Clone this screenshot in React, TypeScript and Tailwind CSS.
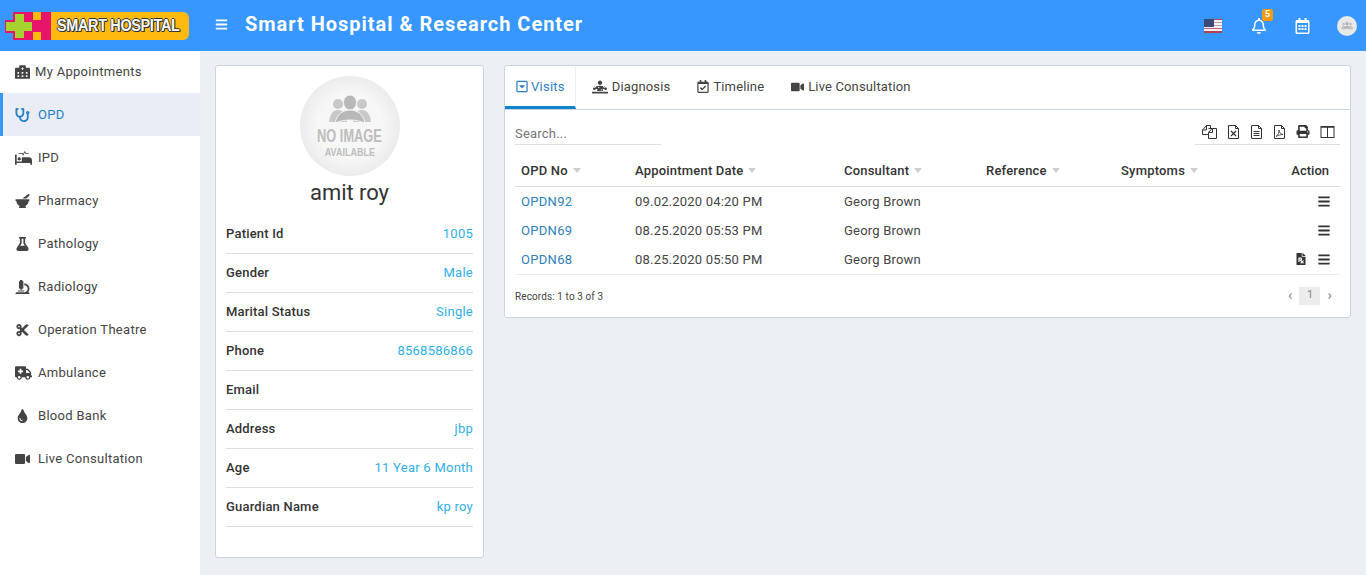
import React from 'react';
import {
  FaAmbulance,
  FaBars,
  FaCut,
  FaDiagnoses,
  FaFilePrescription,
  FaFlask,
  FaHospitalAlt,
  FaMicroscope,
  FaMortarPestle,
  FaPrint,
  FaProcedures,
  FaRegBell,
  FaRegCalendarAlt,
  FaRegCalendarCheck,
  FaRegCaretSquareDown,
  FaStethoscope,
  FaTint,
  FaVideo,
} from 'react-icons/fa';

const menu = [
  { label: 'My Appointments', icon: FaHospitalAlt },
  { label: 'OPD', icon: FaStethoscope, active: true },
  { label: 'IPD', icon: FaProcedures },
  { label: 'Pharmacy', icon: FaMortarPestle },
  { label: 'Pathology', icon: FaFlask },
  { label: 'Radiology', icon: FaMicroscope },
  { label: 'Operation Theatre', icon: FaCut },
  { label: 'Ambulance', icon: FaAmbulance },
  { label: 'Blood Bank', icon: FaTint },
  { label: 'Live Consultation', icon: FaVideo },
];

const details = [
  ['Patient Id', '1005'],
  ['Gender', 'Male'],
  ['Marital Status', 'Single'],
  ['Phone', '8568586866'],
  ['Email', ''],
  ['Address', 'jbp'],
  ['Age', '11 Year 6 Month'],
  ['Guardian Name', 'kp roy'],
];

const visits = [
  { no: 'OPDN92', date: '09.02.2020 04:20 PM', rx: false },
  { no: 'OPDN69', date: '08.25.2020 05:53 PM', rx: false },
  { no: 'OPDN68', date: '08.25.2020 05:50 PM', rx: true },
];

const columns = [
  { label: 'OPD No', width: 'w-[114px]' },
  { label: 'Appointment Date', width: 'w-[209px]' },
  { label: 'Consultant', width: 'w-[142px]' },
  { label: 'Reference', width: 'w-[135px]' },
  { label: 'Symptoms', width: 'w-[130px]' },
];

function Logo() {
  return (
    <div className="flex h-[28px] w-[184px] items-center">
      <svg width="46" height="28" viewBox="0 0 46 28" className="shrink-0">
        <rect x="8" y="0" width="38" height="28" fill="#e8146c" />
        <rect x="0" y="8" width="10" height="13" fill="#e8146c" />
        <rect x="28" y="0" width="8" height="8" fill="#ffb90f" />
        <rect x="28" y="20" width="8" height="8" fill="#ffb90f" />
        <rect x="10" y="2" width="9" height="24" fill="#a5d22f" />
        <rect x="1" y="10" width="26" height="9" fill="#a5d22f" />
      </svg>
      <div className="flex h-full flex-1 items-center overflow-hidden rounded-r-[6px] bg-[#ffb90f] pl-[6px]">
        <span className="inline-block origin-left scale-x-[0.9] whitespace-nowrap font-['Liberation_Sans',sans-serif] text-[16px] leading-none font-bold tracking-[-0.35px] text-white [text-shadow:1px_0_#333,-1px_0_#333,0_1px_#333,0_-1px_#333,1px_1px_#333]">
          SMART HOSPITAL
        </span>
      </div>
    </div>
  );
}

function Flag() {
  return (
    <svg width="18" height="14" viewBox="0 0 18 14">
      <rect width="18" height="14" fill="#f2f2f6" />
      <rect y="0" width="18" height="1" fill="#c0404c" />
      <rect y="3" width="18" height="1" fill="#c9a3b0" />
      <rect y="6" width="18" height="1" fill="#c9a3b0" />
      <rect y="9" width="18" height="1" fill="#c0606c" />
      <rect y="12" width="18" height="2" fill="#b8404c" />
      <rect width="10" height="8" y="0" fill="#3b4a78" />
    </svg>
  );
}

// three people silhouette used on the no-image avatar
function People({ className }: { className?: string }) {
  return (
    <svg viewBox="0 0 42 28" className={className} fill="currentColor">
      <circle cx="9" cy="9" r="5" opacity="0.75" />
      <circle cx="33" cy="9" r="5" opacity="0.75" />
      <path d="M0 27c1-8 4-12 9-12s8 4 9 12z" opacity="0.75" />
      <path d="M24 27c1-8 4-12 9-12s8 4 9 12z" opacity="0.75" />
      <ellipse cx="21" cy="7.5" rx="6.5" ry="7.5" stroke="#f4f4f4" strokeWidth="1" />
      <path d="M6 28c2-9 8-13 15-13s13 4 15 13c-9-4-21-4-30 0z" stroke="#f4f4f4" strokeWidth="1" />
    </svg>
  );
}

function SortCaret() {
  return <span className="ml-[5px] inline-block h-0 w-0 translate-y-[-1px] border-x-[4px] border-t-[5px] border-x-transparent border-t-[#cfcfcf] align-middle" />;
}

function FileIcon({ children }: { children?: React.ReactNode }) {
  return (
    <svg width="13" height="14" viewBox="0 0 13 14" fill="none" stroke="currentColor" strokeWidth="1">
      <path d="M1.5.5h7l3 3v10h-10z" />
      <path d="M8.5.5v3h3" />
      {children}
    </svg>
  );
}

function CopyIcon() {
  return (
    <svg width="15" height="14" viewBox="0 0 15 14" fill="none" stroke="currentColor" strokeWidth="1">
      <path d="M6 9.5H.5V5L4.5.5H8.5V3" />
      <path d="M4.5.5V5H.5" />
      <path d="M6.5 3.5h4l4 0v10h-8V7.5L10 3.5" />
      <path d="M10.5 3.5v4h-4" />
    </svg>
  );
}

function ColumnsIcon() {
  return (
    <svg width="15" height="14" viewBox="0 0 15 14" fill="none" stroke="currentColor" strokeWidth="1">
      <rect x="1" y="1.5" width="13" height="11" />
      <path d="M7.5 1.5v11" />
      <path d="M1 2h13" strokeWidth="1.5" />
    </svg>
  );
}

function Header() {
  return (
    <header className="flex h-[51px] shrink-0 items-center bg-[#3797ff] text-white">
      <div className="ml-[5px] w-[210px] shrink-0">
        <Logo />
      </div>
      <span className="pb-[2px]">
        <FaBars className="h-[13px] w-[13px]" />
      </span>
      <h1 className="ml-[17px] pb-[4px] text-[20px] font-bold tracking-[0.97px]">Smart Hospital &amp; Research Center</h1>
      <div className="ml-auto flex items-center">
        <Flag />
        <div className="relative ml-[29px]">
          <FaRegBell className="h-[16px] w-[16px]" />
          <span className="absolute -top-[9px] left-[11px] flex h-[12px] w-[11px] items-center justify-center rounded-[2px] bg-[#f39c12] text-[9px] font-bold">5</span>
        </div>
        <FaRegCalendarAlt className="ml-[28px] h-[16px] w-[15px]" />
        <div className="ml-[27px] mr-[9px] flex h-[20px] w-[20px] items-center justify-center rounded-full bg-[#e9e9e9]">
          <People className="h-[9px] w-[12px] text-[#b5b5b5]" />
        </div>
      </div>
    </header>
  );
}

function Sidebar() {
  return (
    <aside className="w-[200px] shrink-0 bg-white">
      {menu.map((item, i) => {
        const Icon = item.icon;
        return (
          <div
            key={item.label}
            className={`flex items-center border-l-[3px] pl-[12px] text-[13px] tracking-[0.3px] ${i === 0 ? 'h-[42px]' : 'h-[43px]'} ${
              item.active ? 'border-[#3797ff] bg-[#eaedf5] text-[#1f7fc1]' : 'border-transparent text-[#444]'
            }`}
          >
            <span className="flex w-[23px] shrink-0 items-center">
              <Icon className={item.label === 'Ambulance' || item.label === 'IPD' ? 'h-[14px] w-[17px]' : 'h-[14px] w-[15px]'} />
            </span>
            <span className={i === 0 ? '-ml-[3px]' : ''}>{item.label}</span>
          </div>
        );
      })}
    </aside>
  );
}

function ProfileCard() {
  return (
    <section className="h-[493px] w-[269px] shrink-0 rounded-[3px] border border-[#c9d6e0] bg-white px-[10px] pt-[10px]">
      <div className="mx-auto flex h-[100px] w-[100px] flex-col items-center rounded-full bg-[radial-gradient(circle_at_center,#f7f7f7_45%,#dfdfdf_100%)] pt-[19px] text-[#bdbdbd]">
        <People className="h-[28px] w-[42px] text-[#b8b8b8]" />
        <span className="mt-[6px] inline-block scale-x-[0.8] scale-y-[1.1] font-['Liberation_Sans',sans-serif] text-[16px] leading-[16px] font-bold whitespace-nowrap">NO IMAGE</span>
        <span className="mt-[2px] inline-block scale-x-[0.9] font-['Liberation_Sans',sans-serif] text-[10px] leading-[11px] font-bold">AVAILABLE</span>
      </div>
      <div className="mt-[3px] text-center text-[22px] leading-[28px] tracking-[-0.05px] text-[#333]">amit roy</div>
      <div className="mt-[8px]">
        {details.map(([label, value]) => (
          <div key={label} className="flex h-[39px] items-center justify-between border-b border-[#dddddd] pb-[1px] text-[13px]">
            <span className="font-medium tracking-[0.2px] text-[#333]">{label}</span>
            <span className="tracking-[0.25px] text-[#2fb0e6]">{value}</span>
          </div>
        ))}
      </div>
    </section>
  );
}

function VisitsCard() {
  const tabClass = 'flex h-full items-center gap-[4px] pb-[2px] tracking-[0.15px]';
  return (
    <section className="h-[253px] flex-1 rounded-[3px] border border-[#c9d6e0] bg-white">
      <nav className="flex h-[44px] items-stretch border-b border-[#c9d6e0] text-[13px] text-[#444]">
        <div className="flex items-center gap-[3px] border-r border-b-[3px] border-r-[#eef2f5] border-b-[#0f84cf] pr-[10px] pl-[11px] pt-[1px] text-[#2f7fc4]">
          <FaRegCaretSquareDown className="h-[13px] w-[12px]" />
          <span className="tracking-[0.25px]">Visits</span>
        </div>
        <div className={`${tabClass} ml-[16px]`}>
          <FaDiagnoses className="h-[14px] w-[16px]" />
          Diagnosis
        </div>
        <div className={`${tabClass} ml-[27px]`}>
          <FaRegCalendarCheck className="h-[13px] w-[12px]" />
          Timeline
        </div>
        <div className={`${tabClass} ml-[27px]`}>
          <FaVideo className="h-[12px] w-[13px]" />
          Live Consultation
        </div>
      </nav>

      <div className="px-[10px]">
        <div className="flex h-[36px] items-start justify-between">
          <div className="mt-[11px] h-[24px] w-[146px] border-b border-[#dddddd] text-[13px] leading-[26px] tracking-[0.2px] text-[#757575]">Search...</div>
          <div className="mt-[11px] flex h-[24px] w-[145px] items-start justify-end gap-[10px] border-b border-[#dddddd] pr-[5px] pt-[4px] text-[#333]">
            <CopyIcon />
            <FileIcon>
              <path d="M4 6l5 5M9 6l-5 5" strokeWidth="1.2" />
            </FileIcon>
            <FileIcon>
              <path d="M3.5 6.5h6M3.5 8.5h6M3.5 10.5h6" />
            </FileIcon>
            <FileIcon>
              <path d="M3 11.5c2-1 3-4 3-6.5 0 3 2 4 4 4.5-3 0-5 1-7 2z" strokeWidth="0.8" />
            </FileIcon>
            <FaPrint className="h-[13px] w-[14px]" />
            <ColumnsIcon />
          </div>
        </div>

        <table className="mt-[9px] w-full table-fixed border-collapse text-[13px]">
          <thead>
            <tr className="h-[31px] border-b border-[#dddddd] text-[#333]">
              {columns.map(col => (
                <th key={col.label} className={`${col.width} px-[6px] text-left font-medium tracking-[0.2px]`}>
                  {col.label}
                  <SortCaret />
                </th>
              ))}
              <th className="pr-[11px] text-right font-medium">Action</th>
            </tr>
          </thead>
          <tbody>
            {visits.map((v, i) => (
              <tr key={v.no} className={`text-[#444] ${i === 0 ? 'h-[30px]' : 'h-[29px]'} ${i === visits.length - 1 ? 'border-b border-[#eeeeee]' : ''}`}>
                <td className="px-[6px] tracking-[0.3px] text-[#2f7fb8]">{v.no}</td>
                <td className="px-[6px] tracking-[0.2px]">{v.date}</td>
                <td className="px-[6px] tracking-[0.2px]">Georg Brown</td>
                <td />
                <td />
                <td className="pr-[10px]">
                  <div className="flex items-center justify-end gap-[12px] text-[#333]">
                    {v.rx && <FaFilePrescription className="h-[12px] w-[10px]" />}
                    <FaBars className="h-[13px] w-[12px]" />
                  </div>
                </td>
              </tr>
            ))}
          </tbody>
        </table>

        <div className="mt-[13px] flex items-center justify-between">
          <span className="text-[10px] tracking-[0.1px] text-[#444]">Records: 1 to 3 of 3</span>
          <div className="-mt-[1px] flex items-center text-[#888]">
            <span className="text-[15px] leading-none">‹</span>
            <span className="ml-[7px] flex h-[18px] w-[21px] items-center justify-center bg-[#ececec] text-[11px]">1</span>
            <span className="ml-[7px] mr-[8px] text-[15px] leading-none">›</span>
          </div>
        </div>
      </div>
    </section>
  );
}

export default function App() {
  return (
    <div className="flex h-[575px] flex-col overflow-hidden bg-[#ecf0f5] font-['Roboto',sans-serif]">
      <Header />
      <div className="flex flex-1">
        <Sidebar />
        <main className="flex flex-1 items-start gap-[20px] px-[15px] pt-[14px]">
          <ProfileCard />
          <VisitsCard />
        </main>
      </div>
    </div>
  );
}
